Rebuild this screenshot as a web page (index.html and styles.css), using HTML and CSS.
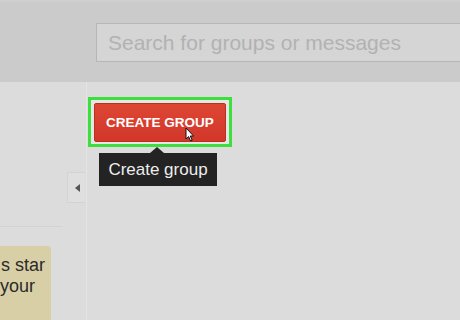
FILE: index.html
```html
<!DOCTYPE html>
<html lang="en">
<head>
  <meta charset="UTF-8" />
  <title>Groups</title>
  <link rel="stylesheet" href="styles.css">
</head>
<body>

<!-- top bar -->
<div class="topbar">
  <div class="search">Search for groups or messages</div>
</div>

<div class="page">
  <!-- left panel -->
  <div class="side">
    <div class="collapse-row">
      <span class="collapse"></span>
    </div>
    <div class="side-rule"></div>
    <div class="note">
      <div class="note-line">s star</div>
      <div class="note-line second">your</div>
    </div>
  </div>

  <!-- main area -->
  <div class="main">
    <div class="highlight">
      <button class="create">CREATE GROUP</button>
      <svg class="cursor" width="10" height="15" viewBox="0 0 10 15">
        <path d="M1 1 L1 12 L3.6 9.6 L5.6 14 L7.2 13.3 L5.3 9 L8.6 9 Z" fill="#fff" stroke="#111" stroke-width="1"/>
      </svg>
      <div class="tip">Create group</div>
    </div>
  </div>
</div>

</body>
</html>
```

FILE: styles.css
```css
body {
  margin: 0;
  font-family: "Liberation Sans", Arial, sans-serif;
  background-color: #dcdcdc;
  overflow: hidden;
}

.topbar {
  height: 82px;
  background-color: #cbcbcb;
  border-top: 2px solid #d0d0d0;
  box-sizing: border-box;
  padding-top: 21px;
  padding-left: 96px;
}
.search {
  height: 39px;
  box-sizing: border-box;
  background-color: #d5d5d5;
  border: 1px solid #b6b6b6;
  border-right: none;
  padding-left: 11px;
  font-size: 21px;
  line-height: 37px;
  color: #b2b2b2;
  white-space: nowrap;
}

.page {
  display: flex;
  height: 238px;
}

/* left panel */
.side {
  width: 87px;
  flex-shrink: 0;
  border-right: 1px solid #e4e4e4;
  box-sizing: border-box;
  background-color: #dcdcdc;
}
.collapse-row {
  display: flex;
  justify-content: flex-end;
  padding-top: 90px;
  padding-right: 1px;
}
.collapse {
  width: 18px;
  height: 31px;
  box-sizing: border-box;
  background-color: #dfdfdf;
  border: 1px solid #d3d3d3;
  border-right: none;
  display: flex;
  align-items: center;
  justify-content: center;
}
.collapse::before {
  content: "";
  border-right: 5px solid #555;
  border-top: 4px solid transparent;
  border-bottom: 4px solid transparent;
  margin-left: 1px;
}
.side-rule {
  width: 62px;
  margin-top: 23px;
  border-top: 1px solid #d2d2d2;
}
.note {
  width: 51px;
  margin-top: 19px;
  height: 80px;
  background-color: #d8cfa7;
  border-top-right-radius: 4px;
  overflow: hidden;
  padding-top: 9px;
  box-sizing: border-box;
  font-size: 18px;
  line-height: 21px;
  color: #2a2a2a;
  white-space: nowrap;
}
.note-line {
  padding-left: 1px;
}
.note-line.second {
  margin-left: -1px;
}

/* main area */
.main {
  flex-grow: 1;
  padding-top: 15px;
  padding-left: 1px;
}
.highlight {
  position: relative;
  display: inline-block;
  border: 3px solid #3ddf3d;
  padding: 3px 3px 2px 3px;
  background-color: #e6e6e6;
}
.create {
  display: block;
  width: 132px;
  height: 39px;
  border: 1px solid #b8301f;
  border-radius: 2px;
  background: linear-gradient(#de4634, #d2372a);
  color: #fff;
  font-family: "Liberation Sans", Arial, sans-serif;
  font-weight: bold;
  font-size: 13.5px;
  padding: 0;
}
.cursor {
  position: absolute;
  left: 94px;
  top: 27px;
}
.tip {
  position: absolute;
  left: 8px;
  top: 53px;
  width: 118px;
  height: 33px;
  box-sizing: border-box;
  background-color: #232323;
  color: #eeeeee;
  font-size: 17px;
  line-height: 33px;
  text-align: center;
}
.tip::before {
  content: "";
  position: absolute;
  left: 51px;
  top: -6px;
  border-bottom: 6px solid #232323;
  border-left: 7px solid transparent;
  border-right: 7px solid transparent;
}
```
